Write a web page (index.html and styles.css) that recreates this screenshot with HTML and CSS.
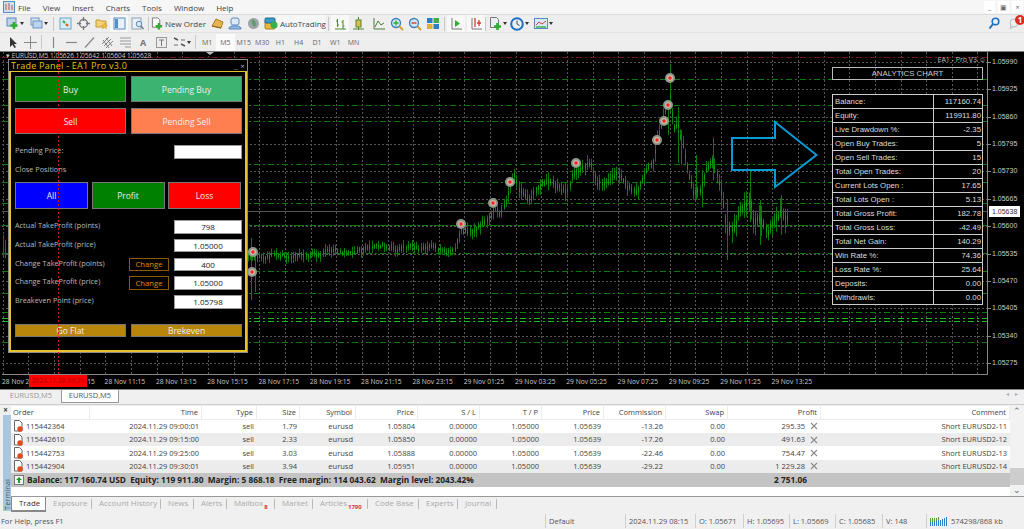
FILE: index.html
```html
<!DOCTYPE html>
<html lang="en">
<head>
    <meta charset="UTF-8">
    <meta name="viewport" content="width=device-width, initial-scale=1.0">
    <title>MetaTrader</title>
    <link rel="stylesheet" href="styles.css">
</head>
<body>
    <svg class="defs" width="0" height="0">
        <symbol id="i-order" viewBox="0 0 10 12">
            <path d="M1.5 .5h5l2.500 2.500v8h-7.500z" fill="#fff" stroke="#666"/>
            <circle cx="7" cy="9" r="2.700" fill="#e2491c"/>
        </symbol>
        <symbol id="i-x" viewBox="0 0 8 8">
            <path d="M1 1l6 6M7 1l-6 6" stroke="#8a8a8a" stroke-width="1.100" fill="none"/>
        </symbol>
    </svg>

    <div class="menubar">
        <svg class="app-icon" width="12" height="12" viewBox="0 0 12 12"><rect x=".5" y=".5" width="11" height="11" fill="#cfe0f2" stroke="#5b8ac0"/><path d="M3 3v6M6 2v7M9 4v5" stroke="#c0504d"/></svg>
        <span class="menu-item">File</span>
        <span class="menu-item">View</span>
        <span class="menu-item">Insert</span>
        <span class="menu-item">Charts</span>
        <span class="menu-item">Tools</span>
        <span class="menu-item">Window</span>
        <span class="menu-item">Help</span>
        <div class="win-btns">
            <span class="win-btn">_</span>
            <span class="win-btn">&#9635;</span>
            <span class="win-btn">&#215;</span>
        </div>
    </div>

    <div class="toolbar tb-main">
        <span class="tb-btn"><svg width="13" height="13" viewBox="0 0 13 13"><rect x="1" y="1" width="9" height="8" fill="#bcd3ea" stroke="#5b8ac0"/><path d="M8 5v7M4.500 8.500h7" stroke="#2fae2f" stroke-width="2.600"/></svg></span><span class="caret"></span>
        <span class="tb-btn"><svg width="13" height="13" viewBox="0 0 13 13"><rect x="1" y="1" width="8" height="7" fill="#dce8f4" stroke="#6a93bf"/><rect x="3" y="4" width="9" height="7" fill="#bcd3ea" stroke="#6a93bf"/></svg></span><span class="caret"></span>
        <span class="tb-sep"></span>
        <span class="tb-btn"><svg width="13" height="13" viewBox="0 0 13 13"><rect x="1" y="1" width="11" height="11" fill="#d6ecf7" stroke="#63a5c9"/><path d="M4 4l2 2" stroke="#2fae2f" stroke-width="2"/><path d="M7 7l2 2" stroke="#e2621c" stroke-width="2.400"/></svg></span>
        <span class="tb-btn"><svg width="13" height="13" viewBox="0 0 13 13"><circle cx="6.500" cy="6.500" r="4" fill="none" stroke="#777" stroke-width="1.300"/><path d="M6.500 0v4M6.500 9v4M0 6.500h4M9 6.500h4" stroke="#777" stroke-width="1.300"/></svg></span>
        <span class="tb-btn"><svg width="13" height="13" viewBox="0 0 13 13"><path d="M1 3h4l1 1h5v6H1z" fill="#f3d27a" stroke="#c49a35"/><path d="M9.500 6l1 2 2 .3-1.500 1.400.4 2-1.900-1-1.900 1 .4-2L6.500 8.300l2-.3z" fill="#f2c230" stroke="#c49a35" stroke-width=".5"/></svg></span>
        <span class="tb-btn tb-on"><svg width="13" height="13" viewBox="0 0 13 13"><rect x="1" y="1" width="11" height="11" fill="#e8f1fa" stroke="#5b8ac0"/><rect x="2" y="2" width="3" height="9" fill="#4f8fca"/></svg></span>
        <span class="tb-btn"><svg width="13" height="13" viewBox="0 0 13 13"><rect x="1" y="1" width="9" height="11" fill="#eef2f6" stroke="#8aa0b8"/><circle cx="8" cy="7" r="2.800" fill="#d6e8f7" stroke="#5b8ac0"/><path d="M10 9l2.500 3" stroke="#777" stroke-width="1.400"/></svg></span>
        <span class="tb-sep"></span>
        <span class="tb-btn tb-wide tb-order"><svg width="13" height="13" viewBox="0 0 13 13"><path d="M1.500 .5h6l2 2v8h-8z" fill="#fff" stroke="#777"/><path d="M8.500 6v7M5 9.500h7" stroke="#2fae2f" stroke-width="2.600"/></svg>New Order</span>
        <span class="tb-btn tb-gold"><svg width="13" height="13" viewBox="0 0 13 13"><path d="M1 9l4-7 7 3-2 6z" fill="#e6b450" stroke="#a87c20"/><path d="M1 9l9 2" stroke="#8a6518"/></svg></span>
        <span class="tb-btn"><svg width="14" height="13" viewBox="0 0 14 13"><rect x="3" y="1" width="8" height="7" rx="2" fill="#dbe9f7" stroke="#5b8ac0"/><path d="M1 11c1-3 11-3 12 0v1H1z" fill="#8db7e0" stroke="#5b8ac0"/></svg></span>
        <span class="tb-btn"><svg width="13" height="13" viewBox="0 0 13 13"><circle cx="6.500" cy="6.500" r="5.500" fill="#9aa5a8"/><path d="M5 2c3 1 5 4 3 8-2-1-4-3-3-8z" fill="#5f9a6b"/></svg></span>
        <span class="tb-btn tb-wide tb-auto"><svg width="14" height="13" viewBox="0 0 14 13"><rect x="1" y="4" width="10" height="8" rx="1" fill="#e8b93a" stroke="#a87c20"/><rect x="1" y="1" width="10" height="5" rx="1" fill="#3c9bcb" stroke="#24678a"/><circle cx="10" cy="8" r="3.500" fill="#35b04a"/></svg>AutoTrading</span>
        <span class="tb-sep"></span>
        <span class="tb-btn tb-on"><svg width="13" height="13" viewBox="0 0 13 13"><path d="M3.500 2v8M2 4h1.500M3.500 8H5M9 3v9M7.500 5H9M9 9h1.500M1 12h11" stroke="#4d8a2d" fill="none"/></svg></span>
        <span class="tb-btn"><svg width="13" height="13" viewBox="0 0 13 13"><path d="M6.500 0v13" stroke="#4d8a2d"/><rect x="4" y="3" width="5" height="7" fill="#e5b94a" stroke="#4d8a2d"/><path d="M1 12h11" stroke="#4d8a2d"/></svg></span>
        <span class="tb-btn tb-push"><svg width="13" height="13" viewBox="0 0 13 13"><path d="M1 1v11h11M2 10l3-6 3 4 3-2" stroke="#4d7a3d" fill="none"/></svg></span>
        <span class="tb-btn"><svg width="14" height="14" viewBox="0 0 14 14"><circle cx="6" cy="6" r="4.500" fill="#cfe6f7" stroke="#3f7fb8" stroke-width="1.300"/><path d="M3.500 6h5M6 3.500v5" stroke="#2fae2f" stroke-width="1.400"/><path d="M9.500 9.500l3.500 3.500" stroke="#d0a030" stroke-width="2"/></svg></span>
        <span class="tb-btn"><svg width="14" height="14" viewBox="0 0 14 14"><circle cx="6" cy="6" r="4.500" fill="#cfe6f7" stroke="#3f7fb8" stroke-width="1.300"/><path d="M3.500 6h5" stroke="#d04030" stroke-width="1.400"/><path d="M9.500 9.500l3.500 3.500" stroke="#d0a030" stroke-width="2"/></svg></span>
        <span class="tb-btn"><svg width="14" height="13" viewBox="0 0 14 13"><rect x="1" y="1" width="5.500" height="5" fill="#2f7fc4"/><rect x="7.500" y="1" width="5.500" height="5" fill="#3fae4a"/><rect x="1" y="7" width="5.500" height="5" fill="#e0b030"/><rect x="7.500" y="7" width="5.500" height="5" fill="#2f7fc4"/></svg></span>
        <span class="tb-sep"></span>
        <span class="tb-btn tb-on"><svg width="13" height="13" viewBox="0 0 13 13"><path d="M2 1v11h10" stroke="#777" fill="none"/><path d="M5 3l5 3.500-5 3.500z" fill="#2fae2f"/></svg></span>
        <span class="tb-btn tb-on tb-push2"><svg width="13" height="13" viewBox="0 0 13 13"><path d="M2 1v11h10" stroke="#777" fill="none"/><path d="M5 1v9M9 3v6M7 6h4" stroke="#d04030" stroke-width="1.300"/></svg></span>
        <span class="tb-sep tb-sep-tight"></span>
        <span class="tb-btn"><svg width="13" height="13" viewBox="0 0 13 13"><path d="M1.500 .5h6l2 2v8h-8z" fill="#e8eef4" stroke="#777"/><path d="M8.500 6v7M5 9.500h7" stroke="#2fae2f" stroke-width="2.600"/></svg></span><span class="caret"></span>
        <span class="tb-btn tb-pull"><svg width="14" height="14" viewBox="0 0 14 14"><circle cx="7" cy="7" r="5.800" fill="#e8f1fa" stroke="#1f6fc0" stroke-width="2"/><path d="M7 3.500V7l2.500 1.500" stroke="#444" fill="none"/></svg></span><span class="caret"></span>
        <span class="tb-btn"><svg width="14" height="13" viewBox="0 0 14 13"><rect x=".5" y="1.500" width="13" height="10" fill="#d8e8f6" stroke="#5b8ac0"/><path d="M2 8l3-3 3 2 4-3" stroke="#d04030" fill="none"/><path d="M2 10h10" stroke="#3fae4a" stroke-width="1.500"/></svg></span><span class="caret"></span>
        <div class="tb-right">
            <svg width="12" height="13" viewBox="0 0 12 13"><circle cx="7.500" cy="4.500" r="3.300" fill="#e8f1fa" stroke="#1f6fc0" stroke-width="1.600"/><path d="M5 7l-3.500 4.500" stroke="#1f6fc0" stroke-width="2"/></svg>
            <span class="chat">
                <svg width="11" height="11" viewBox="0 0 11 11"><circle cx="5" cy="5" r="4" fill="#eee" stroke="#b5bcc4"/><path d="M2 8l-1 2.500 3-1.500" fill="#eee" stroke="#b5bcc4"/></svg>
                <span class="chat-badge">1</span>
            </span>
        </div>
    </div>

    <div class="toolbar tb-draw">
        <span class="tb-btn"><svg width="13" height="13" viewBox="0 0 13 13"><path d="M4 1v10l2.500-2.300L8.500 12l1.500-.8-2-3.300h3z" fill="#333"/></svg></span>
        <span class="tb-btn"><svg width="13" height="13" viewBox="0 0 13 13"><path d="M6.500 0v13M0 6.500h13" stroke="#888"/></svg></span>
        <span class="tb-sep"></span>
        <span class="tb-btn"><svg width="13" height="13" viewBox="0 0 13 13"><path d="M6.500 1v11" stroke="#888" stroke-width="1.200"/></svg></span>
        <span class="tb-btn"><svg width="13" height="13" viewBox="0 0 13 13"><path d="M1 6.500h11" stroke="#888" stroke-width="1.200"/></svg></span>
        <span class="tb-btn"><svg width="13" height="13" viewBox="0 0 13 13"><path d="M2 11.500l9-10" stroke="#888" stroke-width="1.200"/></svg></span>
        <span class="tb-btn"><svg width="13" height="13" viewBox="0 0 13 13"><path d="M1 8l7-7M3 10l7-7M5 12l7-7M2 4l6 8M5 2l6 8" stroke="#777" stroke-width=".9"/></svg></span>
        <span class="tb-btn"><svg width="13" height="13" viewBox="0 0 13 13"><path d="M1 2h11M1 5h11M1 8h11M6 11h6" stroke="#999"/></svg></span>
        <span class="tb-btn tb-letter">A</span>
        <span class="tb-btn"><svg width="13" height="13" viewBox="0 0 13 13"><rect x="1.500" y="1.500" width="10" height="10" fill="none" stroke="#999"/><path d="M4 4h5M6.500 4v6" stroke="#777"/></svg></span>
        <span class="tb-btn"><svg width="13" height="13" viewBox="0 0 13 13"><path d="M1 2l4 2M8 8l4 2" stroke="#555" stroke-width="1.500"/><path d="M1 9h4M8 4h4" stroke="#999" stroke-width="1.500"/></svg></span><span class="caret"></span>
        <span class="tb-sep tb-sep-period"></span>
        <span class="period">M1</span>
        <span class="period period-on">M5</span>
        <span class="period">M15</span>
        <span class="period">M30</span>
        <span class="period">H1</span>
        <span class="period">H4</span>
        <span class="period">D1</span>
        <span class="period">W1</span>
        <span class="period">MN</span>
    </div>

    <div class="chart">
        <svg id="chart-canvas" class="chart-canvas" viewBox="0 51 1024 338" width="1024" height="338"></svg>

        <div class="chart-head">&#9662; EURUSD,M5 1.05626 1.05642 1.05604 1.05628</div>
        <div class="ea-name">EA1 - Pro V3 &#9786;</div>

        <div class="price-axis">
            <span>1.05990</span><span>1.05925</span><span>1.05860</span><span>1.05795</span>
            <span>1.05730</span><span>1.05665</span><span>1.05600</span><span>1.05535</span>
            <span>1.05470</span><span>1.05405</span><span>1.05340</span><span>1.05275</span>
        </div>
        <div class="price-now">1.05638</div>

        <div class="time-axis">
            <span>28 Nov 2</span><span class="time-cut">15</span><span>28 Nov 11:15</span><span>28 Nov 13:15</span>
            <span>28 Nov 15:15</span><span>28 Nov 17:15</span><span>28 Nov 19:15</span><span>28 Nov 21:15</span>
            <span>28 Nov 23:15</span><span>29 Nov 01:25</span><span>29 Nov 03:25</span><span>29 Nov 05:25</span>
            <span>29 Nov 07:25</span><span>29 Nov 09:25</span><span>29 Nov 11:25</span><span>29 Nov 13:25</span>
        </div>
        <div class="time-flag">2024.11.28 09:29</div>

        <div class="panel">
            <div class="panel-title">
                <span>Trade Panel - EA1 Pro v3.0</span>
                <span class="panel-ctl">_ &#215;</span>
            </div>
            <div class="panel-body">
                <div class="btn-grid">
                    <button class="p-btn green">Buy</button>
                    <button class="p-btn seagreen">Pending Buy</button>
                    <button class="p-btn red">Sell</button>
                    <button class="p-btn coral">Pending Sell</button>
                </div>
                <div class="p-row p-row-pending">
                    <span class="p-label">Pending Price:</span>
                    <span class="p-input"></span>
                </div>
                <div class="p-label p-close">Close Positions</div>
                <div class="btn-grid3">
                    <button class="p-btn blue">All</button>
                    <button class="p-btn green">Profit</button>
                    <button class="p-btn red">Loss</button>
                </div>
                <div class="p-form">
                    <div class="p-row">
                        <span class="p-label">Actual TakeProfit (points)</span>
                        <span class="p-input">798</span>
                    </div>
                    <div class="p-row">
                        <span class="p-label">Actual TakeProfit (price)</span>
                        <span class="p-input">1.05000</span>
                    </div>
                    <div class="p-row">
                        <span class="p-label">Change TakeProfit (points)</span>
                        <button class="p-change">Change</button>
                        <span class="p-input">400</span>
                    </div>
                    <div class="p-row">
                        <span class="p-label">Change TakeProfit (price)</span>
                        <button class="p-change">Change</button>
                        <span class="p-input">1.05000</span>
                    </div>
                    <div class="p-row">
                        <span class="p-label">Breakeven Point (price)</span>
                        <span class="p-input">1.05798</span>
                    </div>
                </div>
                <div class="btn-grid btn-grid-flat">
                    <button class="p-btn gold">Go Flat</button>
                    <button class="p-btn gold">Brekeven</button>
                </div>
            </div>
        </div>
        <svg class="crosshair" width="1" height="323"><path d="M.5 0v323" stroke="#d01818" stroke-dasharray="2 2"/></svg>

        <div class="analytics">
            <div class="an-title">ANALYTICS CHART</div>
            <div class="an-table">
                <div class="an-row"><span>Balance:</span><span>117160.74</span></div>
                <div class="an-row"><span>Equity:</span><span>119911.80</span></div>
                <div class="an-row"><span>Live Drawdown %:</span><span>-2.35</span></div>
                <div class="an-row"><span>Open Buy Trades:</span><span>5</span></div>
                <div class="an-row"><span>Open Sell Trades:</span><span>15</span></div>
                <div class="an-row"><span>Total Open Trades:</span><span>20</span></div>
                <div class="an-row"><span>Current Lots Open :</span><span>17.65</span></div>
                <div class="an-row"><span>Total Lots Open :</span><span>5.13</span></div>
                <div class="an-row"><span>Total Gross Profit:</span><span>182.78</span></div>
                <div class="an-row"><span>Total Gross Loss:</span><span>-42.49</span></div>
                <div class="an-row"><span>Total Net Gain:</span><span>140.29</span></div>
                <div class="an-row"><span>Win Rate %:</span><span>74.36</span></div>
                <div class="an-row"><span>Loss Rate %:</span><span>25.64</span></div>
                <div class="an-row"><span>Deposits:</span><span>0.00</span></div>
                <div class="an-row"><span>Withdrawls:</span><span>0.00</span></div>
            </div>
        </div>
    </div>

    <div class="chart-tabs">
        <span class="chart-tab">EURUSD,M5</span>
        <span class="chart-tab chart-tab-on">EURUSD,M5</span>
        <span class="tab-arrows">&#9666; &#9656;</span>
    </div>

    <div class="terminal">
        <div class="term-side">
            <span class="term-close">&#215;</span>
            <span class="term-label">Terminal</span>
        </div>
        <div class="term-main">
            <div class="term-grid">
                <div class="orders">
                    <div class="o-row o-head">
                        <span class="left">Order</span><span>Time</span><span>Type</span><span>Size</span><span>Symbol</span><span>Price</span><span>S / L</span><span>T / P</span><span>Price</span><span>Commission</span><span>Swap</span><span>Profit</span><span>Comment</span>
                    </div>
                    <div class="o-row">
                        <span class="left"><svg class="o-icon"><use href="#i-order"/></svg>115442364</span><span>2024.11.29 09:00:01</span><span>sell</span><span>1.79</span><span>eurusd</span><span>1.05804</span><span>0.00000</span><span>1.05000</span><span>1.05639</span><span>-13.26</span><span>0.00</span><span class="o-profit">295.35<svg class="o-x"><use href="#i-x"/></svg></span><span>Short EURUSD2-11</span>
                    </div>
                    <div class="o-row o-alt">
                        <span class="left"><svg class="o-icon"><use href="#i-order"/></svg>115442610</span><span>2024.11.29 09:15:00</span><span>sell</span><span>2.33</span><span>eurusd</span><span>1.05850</span><span>0.00000</span><span>1.05000</span><span>1.05639</span><span>-17.26</span><span>0.00</span><span class="o-profit">491.63<svg class="o-x"><use href="#i-x"/></svg></span><span>Short EURUSD2-12</span>
                    </div>
                    <div class="o-row">
                        <span class="left"><svg class="o-icon"><use href="#i-order"/></svg>115442753</span><span>2024.11.29 09:25:00</span><span>sell</span><span>3.03</span><span>eurusd</span><span>1.05888</span><span>0.00000</span><span>1.05000</span><span>1.05639</span><span>-22.46</span><span>0.00</span><span class="o-profit">754.47<svg class="o-x"><use href="#i-x"/></svg></span><span>Short EURUSD2-13</span>
                    </div>
                    <div class="o-row o-alt">
                        <span class="left"><svg class="o-icon"><use href="#i-order"/></svg>115442904</span><span>2024.11.29 09:30:01</span><span>sell</span><span>3.94</span><span>eurusd</span><span>1.05951</span><span>0.00000</span><span>1.05000</span><span>1.05639</span><span>-29.22</span><span>0.00</span><span class="o-profit">1 229.28<svg class="o-x"><use href="#i-x"/></svg></span><span>Short EURUSD2-14</span>
                    </div>
                    <div class="o-total">
                        <svg class="o-plus" width="10" height="10" viewBox="0 0 10 10"><rect x=".5" y=".5" width="9" height="9" fill="#f4f4f4" stroke="#777"/><path d="M5 2l3 3H6v3H4V5H2z" fill="#1d9a2a"/></svg>
                        <span class="o-summary">Balance: 117 160.74 USD&nbsp; Equity: 119 911.80&nbsp; Margin: 5 868.18&nbsp; Free margin: 114 043.62&nbsp; Margin level: 2043.42%</span>
                        <span class="o-sum">2 751.06</span>
                    </div>
                </div>
                <div class="scrollbar">
                    <span class="sb-arrow">&#8963;</span>
                    <span class="sb-thumb"></span>
                    <span class="sb-arrow sb-down">&#8964;</span>
                </div>
            </div>
            <div class="term-tabs">
                <span class="term-tab term-tab-on">Trade</span>
                <span class="term-tab">Exposure</span>
                <span class="term-tab">Account History</span>
                <span class="term-tab">News</span>
                <span class="term-tab">Alerts</span>
                <span class="term-tab">Mailbox<sub>8</sub></span>
                <span class="term-tab">Market</span>
                <span class="term-tab">Articles<sub>1790</sub></span>
                <span class="term-tab">Code Base</span>
                <span class="term-tab">Experts</span>
                <span class="term-tab">Journal</span>
            </div>
        </div>
    </div>

    <div class="statusbar">
        <span class="st-cell st-help">For Help, press F1</span>
        <span class="st-cell">Default</span>
        <span class="st-cell">2024.11.29 08:15</span>
        <span class="st-cell">O: 1.05671</span>
        <span class="st-cell">H: 1.05695</span>
        <span class="st-cell">L: 1.05669</span>
        <span class="st-cell">C: 1.05685</span>
        <span class="st-cell">V: 148</span>
        <span class="st-cell st-conn">
            <svg width="18" height="9" viewBox="0 0 18 9"><path d="M.5 9V5M2.500 9V5M4.500 9V4M6.500 9V4M8.500 9V3M10.500 9V3M12.500 9V2M14.500 9V1M16.500 9V0" stroke="#2f7fc4"/><path d="M.5 5V1M2.500 5V1M4.500 4V1M6.500 4V1M8.500 3V0" stroke="#5a9a3a"/></svg>
            574298/868 kb
        </span>
    </div>

    <script src="chart.js"></script>
</body>
</html>
```

FILE: styles.css
```css
* {
    box-sizing: border-box;
}
html, body {
    margin: 0;
    padding: 0;
    height: 529px;
    overflow: hidden;
}
body {
    width: 1024px;
    display: flex;
    flex-direction: column;
    background-color: #f0f0f0;
    color: #333;
    font-family: "Open Sans", "Noto Sans", sans-serif;
    font-size: 8px;
}
button {
    font-family: inherit;
    padding: 0;
    cursor: pointer;
}
.defs {
    position: absolute;
}

/* top menu */
.menubar {
    height: 15px;
    display: flex;
    align-items: center;
    padding-left: 3px;
    background-color: #f6f6f6;
    border-bottom: 1px solid #dcdcdc;
}
.app-icon {
    margin-right: 3px;
}
.menu-item {
    margin-right: 12px;
    font-size: 8px;
    color: #444;
}
.win-btns {
    margin-left: auto;
    display: flex;
    gap: 3px;
    padding-right: 1px;
}
.win-btn {
    width: 11px;
    height: 12px;
    display: flex;
    align-items: center;
    justify-content: center;
    background-color: #fff;
    font-size: 7px;
    color: #666;
}

/* toolbars */
.toolbar {
    height: 18px;
    display: flex;
    align-items: center;
    padding-left: 3px;
    background-color: #eeeeee;
}
.tb-main {
    border-bottom: 1px solid #e2e2e2;
}
.tb-btn {
    width: 18px;
    height: 17px;
    flex: none;
    display: flex;
    align-items: center;
    justify-content: center;
}
.tb-on {
    background-color: #f8f8f8;
}
.tb-wide {
    gap: 2px;
    font-size: 8px;
    color: #444;
    white-space: nowrap;
}
.tb-order {
    width: 55px;
}
.tb-gold {
    margin-left: 2px;
}
.tb-auto {
    width: 62px;
    margin-left: 2px;
    background-color: #f6f6f6;
}
.tb-push {
    margin-left: 3px;
}
.tb-push2 {
    margin-left: 2px;
}
.tb-pull {
    margin-left: -2px;
}
.caret {
    width: 0;
    height: 0;
    margin: 0 3px 0 -1px;
    flex: none;
    border-left: 2.500px solid transparent;
    border-right: 2.500px solid transparent;
    border-top: 3px solid #333;
}
.tb-sep {
    width: 1px;
    height: 14px;
    flex: none;
    margin: 0 2px;
    background-color: #c8c8c8;
}
.tb-sep-tight {
    margin: 0;
}
.tb-right {
    margin-left: auto;
    display: flex;
    align-items: center;
    gap: 9px;
    padding-right: 4px;
}
.chat {
    position: relative;
    display: flex;
}
.chat-badge {
    position: absolute;
    right: -5px;
    top: -3px;
    width: 10px;
    height: 10px;
    border-radius: 50%;
    background-color: #e02a20;
    color: #fff;
    font-size: 8px;
    font-weight: bold;
    line-height: 10px;
    text-align: center;
}
.tb-letter {
    font-weight: bold;
    font-size: 9px;
    color: #777;
}
.tb-sep-period {
    margin-left: 1px;
}
.period {
    width: 18.300px;
    height: 17px;
    display: flex;
    align-items: center;
    justify-content: center;
    font-size: 7px;
    color: #666;
}
.period-on {
    background-color: #fafafa;
}

/* chart */
.chart {
    position: relative;
    height: 338px;
    flex: none;
    background-color: #000;
    overflow: hidden;
    border-top: 1px solid #777;
}
.chart-canvas {
    position: absolute;
    left: 0;
    top: -1px;
}
.chart-head {
    position: absolute;
    left: 6px;
    top: 0;
    width: 150px;
    font-size: 6.500px;
    line-height: 7px;
    color: #ccc;
    white-space: nowrap;
}
.ea-name {
    position: absolute;
    right: 38px;
    top: 3px;
    font-size: 7px;
    line-height: 10px;
    color: #bbb;
}
.price-axis {
    position: absolute;
    left: 992px;
    top: 4px;
    display: flex;
    flex-direction: column;
    font-family: "Liberation Sans", sans-serif;
    font-size: 7px;
    color: #ccc;
}
.price-axis span {
    height: 27.360px;
    line-height: 12px;
}
.price-now {
    position: absolute;
    left: 989px;
    top: 154px;
    width: 31px;
    height: 11px;
    padding-left: 3px;
    background-color: #fff;
    color: #333;
    font-family: "Liberation Sans", sans-serif;
    font-size: 7px;
    line-height: 11px;
}
.time-axis {
    position: absolute;
    left: 2px;
    top: 324px;
    display: flex;
    font-size: 6.700px;
    line-height: 12px;
    color: #ccc;
}
.time-axis span {
    width: 51.300px;
    flex: none;
    white-space: nowrap;
}
.time-axis .time-cut {
    padding-left: 34px;
}
.time-flag {
    position: absolute;
    left: 29px;
    top: 323px;
    width: 58px;
    height: 12px;
    background-color: #ff0000;
    color: #a00;
    font-size: 6.700px;
    line-height: 12px;
    text-align: center;
}
.crosshair {
    position: absolute;
    left: 58px;
    top: 0;
}

/* trade panel */
.panel {
    position: absolute;
    left: 8px;
    top: 7px;
    width: 240px;
    height: 294px;
    display: flex;
    flex-direction: column;
    background-color: #000;
    border: 1px solid #8c8c8c;
}
.panel-title {
    height: 11px;
    flex: none;
    display: flex;
    justify-content: space-between;
    align-items: center;
    padding: 0 2px;
    color: #e8c400;
    font-size: 9px;
    letter-spacing: .25px;
}
.panel-ctl {
    color: #aaa;
    font-size: 8px;
}
.panel-body {
    flex: 1;
    padding: 4px 3px 0 4px;
    border: 2px solid #e6c22c;
    border-top-width: 1px;
}
.btn-grid {
    display: grid;
    grid-template-columns: 111px 111px;
    gap: 6px 5px;
}
.btn-grid .p-btn {
    height: 26px;
}
.btn-grid3 {
    display: grid;
    grid-template-columns: 73px 73px 73px;
    gap: 3.500px;
}
.btn-grid3 .p-btn {
    height: 27px;
}
.p-btn {
    border: 1px solid #777;
    color: #eee;
    font-size: 8.500px;
}
.green {
    background-color: #008000;
}
.seagreen {
    background-color: #3cb371;
}
.red {
    background-color: #ff0000;
}
.coral {
    background-color: #ff7f50;
}
.blue {
    background-color: #0000ff;
}
.gold {
    background-color: #b8860b;
}
.p-row {
    height: 13.500px;
    display: flex;
    align-items: flex-start;
}
.p-row-pending {
    margin-top: 11px;
    height: 14px;
}
.p-label {
    flex: 1;
    color: #bbb;
    font-size: 7.300px;
    line-height: 11px;
}
.p-close {
    margin-top: 5px;
    height: 18px;
}
.p-input {
    width: 68px;
    height: 100%;
    flex: none;
    background-color: #fff;
    border: 1px solid #999;
    color: #222;
    font-size: 8px;
    line-height: 12px;
    text-align: center;
}
.p-change {
    width: 40px;
    height: 100%;
    flex: none;
    margin-right: 5px;
    background-color: #000;
    border: 1px solid #8a5a00;
    color: #e08c00;
    font-size: 7.700px;
}
.p-form {
    display: flex;
    flex-direction: column;
    gap: 5.250px;
    margin-top: 11px;
}
.btn-grid-flat {
    margin-top: 15px;
}
.btn-grid-flat .p-btn {
    height: 13px;
}

/* analytics table */
.analytics {
    position: absolute;
    left: 832px;
    top: 15px;
    width: 151px;
    font-family: "Liberation Sans", sans-serif;
    font-size: 7.800px;
    color: #ddd;
}
.an-title {
    height: 13px;
    border: 1px solid #bbb;
    line-height: 12px;
    text-align: center;
    color: #ccc;
}
.an-table {
    margin-top: 14px;
    display: flex;
    flex-direction: column;
    background-color: #000;
    border-top: 1px solid #ccc;
}
.an-row {
    height: 14px;
    display: grid;
    grid-template-columns: 100px 51px;
    border: 1px solid #ccc;
    border-top: 0;
    line-height: 13px;
}
.an-row span {
    padding: 0 2px;
}
.an-row span:last-child {
    border-left: 1px solid #ccc;
    text-align: right;
    padding-right: 3px;
}

/* chart tabs */
.chart-tabs {
    height: 15px;
    flex: none;
    display: flex;
    align-items: flex-start;
    padding-left: 1px;
    background-color: #f0f0f0;
    border-top: 1px solid #888;
    font-size: 7.500px;
}
.chart-tab {
    width: 60px;
    height: 12px;
    line-height: 11px;
    text-align: center;
    color: #999;
}
.chart-tab-on {
    width: 58px;
    height: 13px;
    background-color: #fff;
    color: #555;
    border: 1px solid #999;
    border-top: 0;
}
.tab-arrows {
    margin-left: auto;
    padding-right: 6px;
    color: #aaa;
    font-size: 6px;
    word-spacing: 4px;
}

/* terminal */
.terminal {
    height: 109px;
    flex: none;
    display: flex;
    border-top: 1px solid #ccc;
}
.term-side {
    width: 11px;
    flex: none;
    display: flex;
    flex-direction: column;
    align-items: flex-end;
}
.term-close {
    height: 10px;
    width: 11px;
    font-size: 8px;
    font-weight: bold;
    line-height: 9px;
    text-align: center;
    color: #333;
}
.term-label {
    width: 8px;
    height: 96px;
    background-color: #a9c6dc;
    color: #35566e;
    writing-mode: vertical-rl;
    transform: rotate(180deg);
    font-size: 7.500px;
    line-height: 8px;
    padding-top: 1px;
}
.term-main {
    flex: 1;
    display: flex;
    flex-direction: column;
}
.term-grid {
    height: 91px;
    flex: none;
    margin-top: 1px;
    display: flex;
    background-color: #fff;
    border-bottom: 1px solid #999;
}
.orders {
    width: 999px;
    flex: none;
}
.o-row {
    height: 13.400px;
    display: grid;
    grid-template-columns: 79px 112px 55px 43px 56px 62px 62px 62px 62px 62px 62px 93px 189px;
    align-items: center;
    font-size: 7.500px;
    color: #444;
    white-space: nowrap;
}
.o-row span {
    display: flex;
    align-items: center;
    justify-content: flex-end;
    padding-right: 3px;
    line-height: 13px;
}
.o-row .left {
    justify-content: flex-start;
    padding-left: 2px;
}
.o-head {
    height: 13.600px;
}
.o-head span {
    height: 100%;
    border-right: 1px solid #ececec;
    border-bottom: 1px solid #ececec;
}
.o-alt {
    background-color: #ececec;
}
.o-icon {
    width: 10px;
    height: 12px;
    margin-right: 3px;
    flex: none;
}
.o-x {
    width: 8px;
    height: 8px;
    margin-left: 5px;
}
.o-total {
    height: 13.400px;
    display: flex;
    align-items: center;
    padding-left: 3px;
    background-color: #c4c4c4;
    color: #222;
    font-size: 8.300px;
    font-weight: 700;
    white-space: nowrap;
}
.o-plus {
    margin-right: 3px;
}
.o-sum {
    margin-left: auto;
    margin-right: 203px;
}
.scrollbar {
    flex: 1;
    display: flex;
    flex-direction: column;
    align-items: center;
    background-color: #f2f2f2;
    color: #666;
    font-size: 9px;
    line-height: 10px;
}
.sb-arrow {
    height: 12px;
}
.sb-thumb {
    width: 100%;
    height: 17px;
    margin-top: 50px;
    background-color: #cdcdcd;
}
.sb-down {
    height: 8px;
}
.term-tabs {
    height: 15px;
    flex: none;
    display: grid;
    grid-template-columns: 35px 46px 69px 33px 33px 48px 38px 55px 51px 39px 39px;
    font-size: 7.900px;
    line-height: 13px;
    color: #aaa;
}
.term-tab {
    padding-left: 7px;
    white-space: nowrap;
    position: relative;
}
.term-tab::after {
    content: "";
    position: absolute;
    right: 0;
    top: 2px;
    width: 1px;
    height: 10px;
    background-color: #bbb;
}
.term-tab-on {
    background-color: #fff;
    color: #333;
    border: 1px solid #888;
    border-top: 0;
    border-bottom-width: 2px;
}
.term-tab-on::after {
    display: none;
}
.term-tab sub {
    color: #e03030;
    font-size: 6px;
    font-weight: bold;
    line-height: 0;
    margin-left: 1px;
}

/* status bar */
.statusbar {
    height: 16px;
    flex: none;
    display: grid;
    grid-template-columns: 545px 80px 70px 48px 46px 46px 47px 44px 98px;
    align-items: center;
    background-color: #f0f0f0;
    font-size: 7.500px;
    color: #555;
}
.st-cell {
    height: 14px;
    padding-left: 3px;
    border-left: 1px solid #d0d0d0;
    line-height: 14px;
    white-space: nowrap;
}
.st-help {
    border-left: 0;
    padding-left: 1px;
}
.st-conn {
    display: flex;
    align-items: center;
    gap: 3px;
}
```

FILE: chart.js
```js
var svg = document.getElementById('chart-canvas');
var NS = 'http://www.w3.org/2000/svg';

function add(tag, attrs) {
    var el = document.createElementNS(NS, tag);
    for (var k in attrs) el.setAttribute(k, attrs[k]);
    svg.appendChild(el);
    return el;
}

function hline(y, color, dash, width) {
    add('path', { d: 'M2 ' + y + 'H988', stroke: color, 'stroke-dasharray': dash, 'stroke-width': width || 1, fill: 'none' });
}

// grid
var i, x;
for (x = 259.3 - 25.65 * 10; x < 988; x += 25.65) {
    add('path', { d: 'M' + Math.round(x) + '.5 52V374', stroke: '#555', 'stroke-dasharray': '2 2', fill: 'none' });
}
for (i = 0; i < 12; i++) {
    hline(Math.round(62 + i * 27.36) + 0.5, '#555', '2 2');
    add('path', { d: 'M988 ' + (Math.round(62 + i * 27.36) + 0.5) + 'h3', stroke: '#888' });
}

// order lines
[79, 105, 121, 164, 182, 203, 225, 253, 271, 293, 312, 342].forEach(function (y) {
    hline(y + 0.5, '#0a7a0a', '6 3 2 3');
});
hline(318.5, '#16c016', '6 3 2 3');
hline(321.5, '#16c016', '6 3 2 3');
hline(225.5, '#0a7a0a', '2 2');
hline(57.5, '#7a1010', '6 3 2 3');
add('path', { d: 'M2 211.500H988', stroke: '#555', fill: 'none' });
add('path', { d: 'M987.500 52V374.500H2', stroke: '#888', fill: 'none' });
add('path', { d: 'M206 52h8l-4 3z', fill: '#bbb' });

// price path, [x, y] by eye from the chart
var pts = [
    [0, 245], [8, 250], [248, 255], [265, 258], [275, 255], [290, 257], [300, 255], [320, 254], [330, 249],
    [340, 252], [350, 254], [365, 248], [385, 245], [395, 250], [410, 245], [420, 250], [430, 245],
    [440, 250], [450, 253], [455, 248], [460, 230], [470, 232], [480, 225], [490, 218], [495, 205],
    [500, 215], [505, 205], [510, 185], [515, 175], [518, 190], [525, 195], [530, 200], [535, 190],
    [540, 185], [550, 180], [557, 187], [567, 193], [573, 173], [580, 170], [590, 163], [597, 183],
    [607, 183], [617, 173], [627, 187], [637, 192], [647, 170], [653, 160], [657, 140], [663, 120],
    [668, 103], [670, 95], [673, 127], [678, 125], [683, 147], [688, 173], [693, 193], [700, 190],
    [707, 167], [713, 160], [720, 187], [727, 230], [733, 230], [740, 210], [750, 200], [753, 223],
    [760, 217], [767, 233], [773, 223], [780, 213], [787, 220]
];

function midAt(px) {
    for (var n = 1; n < pts.length; n++) {
        if (px <= pts[n][0]) {
            var t = (px - pts[n - 1][0]) / (pts[n][0] - pts[n - 1][0]);
            return pts[n - 1][1] + t * (pts[n][1] - pts[n - 1][1]);
        }
    }
    return pts[pts.length - 1][1];
}

var seed = 77;
function rnd() {
    seed = (seed * 1103515245 + 12345) % 2147483648;
    return seed / 2147483648;
}

// candles
var wicks = '', bodies = '';
for (x = 248; x <= 787; x += 2.13) {
    var mid = midAt(x) + (rnd() - 0.5) * 3;
    var amp = x < 455 ? 5 : x < 720 ? 7 : 11;
    var hi = mid - amp * (0.4 + rnd());
    var lo = mid + amp * (0.4 + rnd());
    var px = Math.round(x) + 0.5;
    wicks += 'M' + px + ' ' + hi.toFixed(1) + 'V' + lo.toFixed(1);
    bodies += 'M' + px + ' ' + (mid - amp * 0.3).toFixed(1) + 'V' + (mid + amp * 0.3).toFixed(1);
}
// the tall bars that stand out
[[3, 235, 256], [5, 240, 258], [251, 238, 300], [255, 248, 292], [670, 66, 112], [668, 100, 135], [678, 107, 163],
 [681, 130, 165], [713, 138, 180], [750, 170, 222], [727, 200, 260], [702, 170, 207], [696, 155, 200], [760, 200, 245], [781, 195, 235]].forEach(function (b) {
    wicks += 'M' + b[0] + '.5 ' + b[1] + 'V' + b[2];
});
add('path', { d: wicks, stroke: '#0a7a0a', fill: 'none' });
add('path', { d: bodies, stroke: '#0f9a0f', fill: 'none' });

// trade marks
[[670, 78], [668, 105], [664, 121], [657, 140], [576, 163], [510, 182], [493, 203], [461, 224], [253, 252], [252, 272]].forEach(function (m) {
    add('circle', { cx: m[0], cy: m[1], r: 5, fill: '#8d9a8a' });
    add('circle', { cx: m[0], cy: m[1], r: 3, fill: '#c9b7a8' });
    add('circle', { cx: m[0], cy: m[1], r: 1.7, fill: '#ff2020' });
});
[[245, 294], [238, 311]].forEach(function (m) {
    add('circle', { cx: m[0], cy: m[1], r: 1.6, fill: '#ff2020' });
});

// arrow
add('path', { d: 'M732 138H775V122L816.500 155 775 187V170H732Z', fill: 'none', stroke: '#0a9ad6', 'stroke-width': 2 });
```
